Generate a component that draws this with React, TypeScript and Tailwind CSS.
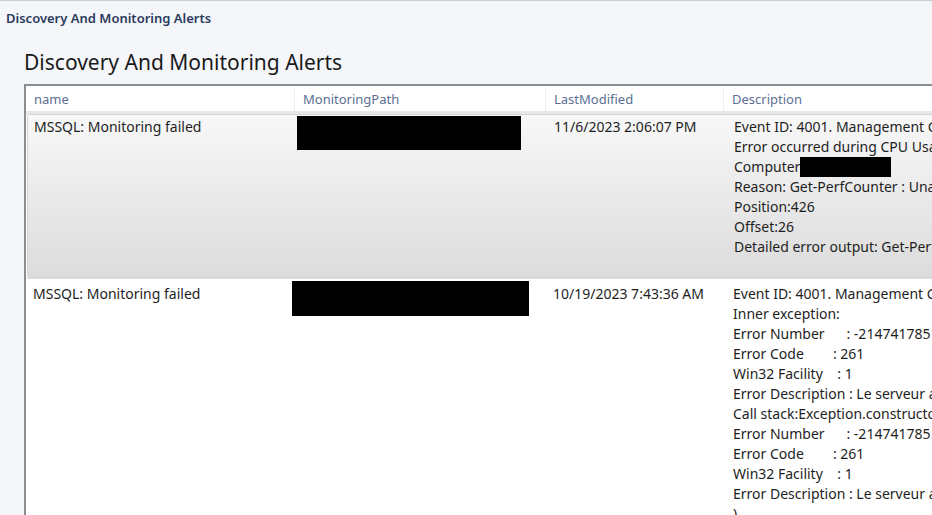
import React from 'react';

type Row = {
  name: string;
  modified: string;
  pathBox: { w: number; h: number; ml: number; mt: number };
  lines: React.ReactNode[];
  selected?: boolean;
};

const rows: Row[] = [
  {
    name: 'MSSQL: Monitoring failed',
    modified: '11/6/2023 2:06:07 PM',
    pathBox: { w: 224, h: 34, ml: 0, mt: 1 },
    selected: true,
    lines: [
      'Event ID: 4001. Management Group: Alert on Microsoft SQL Server',
      'Error occurred during CPU Usage data collection.',
      <span key="c" className="flex items-center">
        Computer:
        <span className="ml-[-4px] inline-block h-[20px] w-[91px] bg-black" />
      </span>,
      'Reason: Get-PerfCounter : Unable to get counters',
      'Position:426',
      'Offset:26',
      'Detailed error output: Get-PerfCounter : Unable to get counters',
    ],
  },
  {
    name: 'MSSQL: Monitoring failed',
    modified: '10/19/2023 7:43:36 AM',
    pathBox: { w: 237, h: 35, ml: -4, mt: 1 },
    lines: [
      'Event ID: 4001. Management Group: Alert on Microsoft SQL Server',
      'Inner exception:',
      'Error Number      : -2147417851',
      'Error Code        : 261',
      'Win32 Facility    : 1',
      'Error Description : Le serveur a généré une exception.',
      'Call stack:Exception.constructor(',
      'Error Number      : -2147417851',
      'Error Code        : 261',
      'Win32 Facility    : 1',
      'Error Description : Le serveur a généré une exception.',
      ')',
    ],
  },
];

const cols = ['w-[269px]', 'w-[251px]', 'w-[178px]', 'w-[420px]'];

export default function App() {
  return (
    <div
      className="h-[515px] w-[932px] overflow-hidden border-t border-[#c9ccd2] bg-[#f4f6fa] text-[#1e1e1e]"
      style={{ fontFamily: '"Segoe UI", "Noto Sans", sans-serif' }}
    >
      <div className="flex h-[36px] items-center px-[6px] text-[13px] font-semibold text-[#2b3a5c]">
        Discovery And Monitoring Alerts
      </div>
      <div className="pl-[24px]">
        <h1 className="flex h-[47px] items-center pt-[4px] text-[21px] leading-none text-[#1a1a1a]">
          Discovery And Monitoring Alerts
        </h1>
        <div className="w-[1200px] border-l-2 border-t-2 border-[#8a8d92] bg-white">
          {/* header */}
          <div className="flex h-[28px] items-center border-b-[3px] border-[#e6e7e9] pt-[2px] text-[13px] text-[#5a6f94]">
            {['name', 'MonitoringPath', 'LastModified', 'Description'].map((h, i) => (
              <div
                key={h}
                className={`${cols[i]} flex h-full items-center border-r border-[#eceef1] pl-[8px]`}
              >
                {h}
              </div>
            ))}
          </div>
          {rows.map((r, idx) => (
            <div
              key={idx}
              className={
                r.selected
                  ? 'ml-[1px] flex rounded-[2px] border border-[#d4d4d4] bg-gradient-to-b from-[#f8f8f8] to-[#dcdcdc] pb-[20px]'
                  : 'ml-[1px] flex border-t border-[#e2e2e2] pt-[1px]'
              }
            >
              <div className={`${cols[0]} pl-[6px] ${r.selected ? 'pt-[2px]' : 'pt-[4px]'} text-[14px] leading-[20px]`}>
                {r.name}
              </div>
              <div className={`${cols[1]}`}>
                <div
                  className="bg-black"
                  style={{ width: r.pathBox.w, height: r.pathBox.h, marginLeft: r.pathBox.ml, marginTop: r.pathBox.mt }}
                />
              </div>
              <div className={`${cols[2]} pl-[6px] ${r.selected ? 'pt-[2px]' : 'pt-[4px]'} text-[14px] leading-[20px]`}>
                {r.modified}
              </div>
              <div className={`${cols[3]} pl-[8px] ${r.selected ? 'pt-[2px]' : 'pt-[4px]'} text-[14px] leading-[20px]`}>
                {r.lines.map((l, i) => (
                  <div key={i} className="whitespace-pre">
                    {l}
                  </div>
                ))}
              </div>
            </div>
          ))}
        </div>
      </div>
    </div>
  );
}
